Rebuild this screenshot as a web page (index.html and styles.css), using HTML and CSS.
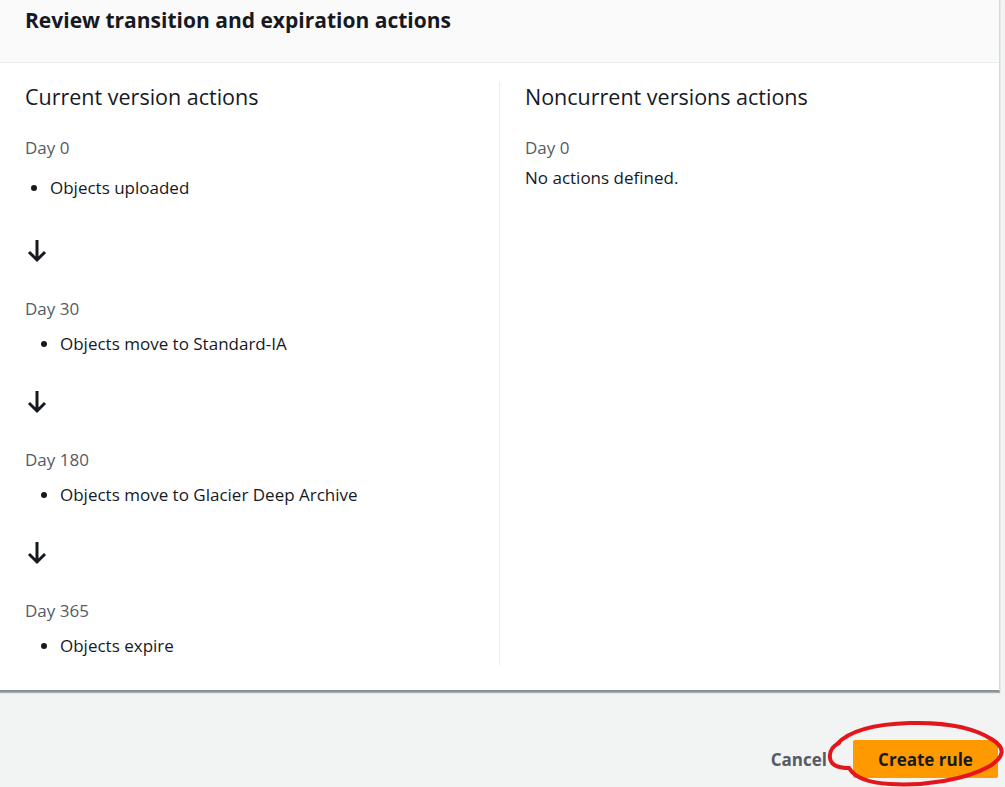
FILE: index.html
```html
<!DOCTYPE html>
<html lang="en">
<head>
<meta charset="utf-8">
<title>Review transition and expiration actions</title>
<link rel="stylesheet" href="styles.css">
</head>
<body>
<div class="card">
  <div class="card-header">
    <h2 class="card-title">Review transition and expiration actions</h2>
  </div>
  <div class="card-body">
    <div class="col col-left">
      <h3 class="col-title">Current version actions</h3>
      <div class="day first-day">Day 0</div>
      <ul class="actions first-actions"><li>Objects uploaded</li></ul>
      <div class="arrow arrow-first"><svg width="20" height="24" viewBox="0 0 20 24"><path d="M10 1 V21 M2 13 L10 21 L18 13" fill="none" stroke="#16191f" stroke-width="3"/></svg></div>
      <div class="day">Day 30</div>
      <ul class="actions"><li>Objects move to Standard-IA</li></ul>
      <div class="arrow"><svg width="20" height="24" viewBox="0 0 20 24"><path d="M10 1 V21 M2 13 L10 21 L18 13" fill="none" stroke="#16191f" stroke-width="3"/></svg></div>
      <div class="day">Day 180</div>
      <ul class="actions"><li>Objects move to Glacier Deep Archive</li></ul>
      <div class="arrow"><svg width="20" height="24" viewBox="0 0 20 24"><path d="M10 1 V21 M2 13 L10 21 L18 13" fill="none" stroke="#16191f" stroke-width="3"/></svg></div>
      <div class="day">Day 365</div>
      <ul class="actions"><li>Objects expire</li></ul>
    </div>
    <div class="col col-right">
      <h3 class="col-title">Noncurrent versions actions</h3>
      <div class="day first-day">Day 0</div>
      <p class="none">No actions defined.</p>
    </div>
  </div>
</div>
<div class="footer">
  <button class="btn-link">Cancel</button>
  <button class="btn-primary">Create rule</button>
  <svg class="annotation" width="180" height="72" viewBox="0 0 180 72"><path d="M12 28 C25 14 50 8 85 7 C120 6 150 12 168 24 C180 32 180 40 165 50 C140 64 100 70 65 68 C45 67 30 62 24 52 C14 52 6 50 5 42 C4 34 8 30 14 27" fill="none" stroke="#e3161b" stroke-width="4" stroke-linecap="round"/></svg>
</div>
</body>
</html>
```

FILE: styles.css
```css
* { box-sizing: border-box; }
html, body { margin: 0; padding: 0; }
body {
  background: #f2f3f3;
  font-family: "Open Sans", "Noto Sans", sans-serif;
  color: #16191f;
  width: 1005px;
  height: 787px;
  overflow: hidden;
}
.card {
  width: 1000px;
  background: #ffffff;
  border-right: 1px solid #d5dbdb;
  border-bottom: 2px solid #879596;
  box-shadow: 0 1px 1px rgba(0,28,36,0.3);
}
.card-header {
  height: 63px;
  background: #fafafa;
  border-bottom: 1px solid #eaeded;
  padding: 6px 25px 0;
}
.card-title {
  margin: 0;
  font-size: 21px;
  line-height: 28px;
  font-weight: 700;
}
.card-body {
  display: grid;
  grid-template-columns: 499px 1fr;
  padding: 19px 0 25px;
}
.col { padding: 0 25px 7px; }
.col-right { border-left: 1px solid #eaeded; }
.col-title {
  margin: 0;
  font-size: 21.5px;
  line-height: 30px;
  font-weight: 400;
}
.day {
  color: #545b64;
  font-size: 17px;
  line-height: 24px;
  margin-top: 34px;
}
.day.first-day { margin-top: 24px; }
.actions {
  margin: 11px 0 0;
  padding-left: 35px;
  font-size: 17px;
  line-height: 24px;
}
.actions.first-actions { margin-top: 16px; padding-left: 25px; }
.arrow {
  margin-top: 34px;
  height: 24px;
  padding-left: 2px;
  line-height: 0;
}
.arrow.arrow-first { margin-top: 39px; }
.arrow svg { display: block; }
.none {
  margin: 6px 0 0;
  font-size: 17px;
  line-height: 24px;
}
.footer {
  position: relative;
  display: flex;
  justify-content: flex-end;
  align-items: center;
  gap: 26px;
  padding: 48px 7px 0 0;
}
.btn-link {
  background: none;
  border: none;
  padding: 0;
  font-family: inherit;
  font-size: 17px;
  font-weight: 700;
  color: #545b64;
}
.btn-primary {
  width: 145px;
  height: 38px;
  background: #ff9900;
  border: none;
  border-radius: 2px;
  font-family: inherit;
  font-size: 17px;
  font-weight: 700;
  color: #16191f;
}
.annotation {
  position: absolute;
  right: 0;
  top: 24px;
}
```
